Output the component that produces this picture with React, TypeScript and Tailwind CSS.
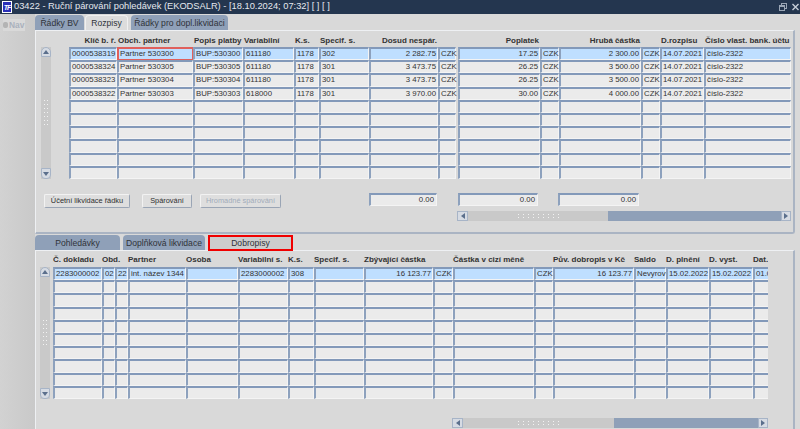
const topCols = [
  { t: "Klíč b. ř.", w: 48, h: "right" },
  { t: "Obch. partner", w: 76 },
  { t: "Popis platby", w: 50 },
  { t: "Variabilní", w: 51 },
  { t: "K.s.", w: 25 },
  { t: "Specif. s.", w: 50 },
  { t: "Dosud nespár.", w: 69, h: "right" },
  { t: "", w: 18 },
  { t: "", w: 2, spacer: true },
  { t: "Poplatek", w: 82, h: "right" },
  { t: "", w: 19 },
  { t: "Hrubá částka", w: 82, h: "right" },
  { t: "", w: 19 },
  { t: "D.rozpisu", w: 44 },
  { t: "Číslo vlast. bank. účtu", w: 87 },
];

const topRows = [
  ["0000538319", "Partner 530300", "BUP:530300", "611180", "1178", "302", "2 282.75", "CZK", "", "17.25", "CZK", "2 300.00", "CZK", "14.07.2021", "číslo-2322"],
  ["0000538324", "Partner 530305", "BUP:530305", "611180", "1178", "301", "3 473.75", "CZK", "", "26.25", "CZK", "3 500.00", "CZK", "14.07.2021", "číslo-2322"],
  ["0000538323", "Partner 530304", "BUP:530304", "611180", "1178", "301", "3 473.75", "CZK", "", "26.25", "CZK", "3 500.00", "CZK", "14.07.2021", "číslo-2322"],
  ["0000538322", "Partner 530303", "BUP:530303", "618000", "1178", "301", "3 970.00", "CZK", "", "30.00", "CZK", "4 000.00", "CZK", "14.07.2021", "číslo-2322"],
];

const topRight = [0, 6, 9, 11];

const lowCols = [
  { t: "Č. dokladu", w: 49 },
  { t: "Obd.", w: 13 },
  { t: "", w: 13 },
  { t: "Partner", w: 58 },
  { t: "Osoba", w: 52 },
  { t: "Variabilní s.", w: 50 },
  { t: "K.s.", w: 26 },
  { t: "Specif. s.", w: 50 },
  { t: "Zbývající částka", w: 69 },
  { t: "", w: 20 },
  { t: "Částka v cizí měně", w: 81 },
  { t: "", w: 19 },
  { t: "Pův. dobropis v Kč", w: 81 },
  { t: "Saldo", w: 32 },
  { t: "D. plnění", w: 43 },
  { t: "D. vyst.", w: 44 },
  { t: "Dat.", w: 44 },
];

const lowRow = ["2283000002", "02", "22", "int. název 1344", "", "2283000002", "308", "", "16 123.77", "CZK", "", "CZK", "16 123.77", "Nevyrov", "15.02.2022", "15.02.2022", "01.03.2022"];
const lowRight = [8, 12];

function Cell({ text, sel, right, red }: { text?: string; sel?: boolean; right?: boolean; red?: boolean }) {
  return (
    <div
      className={
        "h-[13.2px] whitespace-nowrap border-t-2 border-l-2 border-r border-b px-px text-[7.8px] leading-[9.5px] text-[#333] " +
        (red
          ? "border-[#e0605c] border-t-[#e0605c] border-l-[#e0605c] "
          : "border-t-[#8399b9] border-l-[#8da1bd] border-r-[#f4f4f4] border-b-[#f4f4f4] ") +
        (sel ? "bg-[#bfdfff] " : "bg-[#ebebeb] ") +
        (right ? "text-right" : "text-left")
      }
    >
      {text}
    </div>
  );
}

function Dots({ vertical }: { vertical?: boolean }) {
  const dots = Array.from({ length: vertical ? 14 : 18 });
  return (
    <div className={vertical ? "grid grid-cols-2 gap-x-[2px] gap-y-[3px]" : "grid grid-flow-col grid-rows-2 gap-x-[4px] gap-y-[2px]"}>
      {dots.map((_, i) => (
        <span key={i} className="block h-px w-px bg-[#f2f2f2]" />
      ))}
    </div>
  );
}

function Arrow({ dir }: { dir: "up" | "down" | "left" | "right" }) {
  const pts = { up: "1,6 4,2 7,6", down: "1,2 4,6 7,2", left: "6,1 2,4 6,7", right: "2,1 6,4 2,7" }[dir];
  return (
    <svg width="8" height="8" viewBox="0 0 8 8" className="block">
      <polygon points={pts} fill="#5b6f8c" />
    </svg>
  );
}

function VScroll({ className }: { className: string }) {
  return (
    <div className={"flex w-[10px] flex-col items-center justify-between bg-[#c9c9c9] " + className}>
      <div className="flex h-[10px] w-[10px] items-center justify-center rounded-t-full border border-[#a7b4c7] bg-[#d6dbe3]">
        <Arrow dir="up" />
      </div>
      <Dots vertical />
      <div className="flex h-[11px] w-[10px] items-center justify-center rounded-b-[4px] border border-[#a7b4c7] bg-[#d6dbe3]">
        <Arrow dir="down" />
      </div>
    </div>
  );
}

function HScroll({ className, thumb }: { className: string; thumb: string }) {
  return (
    <div className={"flex h-[10px] items-stretch bg-[#8fa0b8] " + className}>
      <div className="flex w-[11px] items-center justify-center border border-[#a7b4c7] bg-[#d6dbe3]">
        <Arrow dir="left" />
      </div>
      <div className={"flex items-center justify-center bg-[#c9c9c9] " + thumb}>
        <Dots />
      </div>
      <div className="ml-auto flex w-[10px] items-center justify-center border border-[#a7b4c7] bg-[#d6dbe3]">
        <Arrow dir="right" />
      </div>
    </div>
  );
}

function Btn({ children, className, disabled }: { children: string; className: string; disabled?: boolean }) {
  return (
    <div
      className={
        "mt-px flex h-[14px] items-center justify-center rounded-[2px] border border-[#f2f2f2] border-r-[#9aa5b5] border-b-[#9aa5b5] bg-[#dedede] text-[7.4px] " +
        (disabled ? "text-[#a2acba] " : "text-[#2e2e2e] ") +
        className
      }
    >
      {children}
    </div>
  );
}

function Tab({ children, className }: { children: string; className: string }) {
  return <div className={"flex items-center justify-center pt-px text-[8.6px] text-[#2f3338] " + className}>{children}</div>;
}

function Sum({ className }: { className: string }) {
  return (
    <div className={"h-[13px] border-t-2 border-l-2 border-r border-b border-t-[#8399b9] border-l-[#8da1bd] border-r-[#f4f4f4] border-b-[#f4f4f4] bg-[#ebebeb] px-[2px] text-right text-[7.8px] leading-[9.5px] text-[#333] " + className}>
      0.00
    </div>
  );
}

export default function App() {
  return (
    <div className="flex h-[429px] w-[800px] flex-col overflow-hidden bg-[#d9d9d9] font-['Liberation_Sans',Arial,sans-serif]">
      {/* title bar */}
      <div className="flex h-[14px] shrink-0 items-center bg-[#24364f] text-[9.3px] text-[#e4e8ee]">
        <div className="ml-[2px] mr-[2px] flex h-[12px] w-[10px] shrink-0 items-center justify-center overflow-hidden border border-white bg-[#2a2fb8] text-[7px] font-bold italic leading-none tracking-[-1px] text-white">
          TF
        </div>
        <span className="whitespace-nowrap">03422 - Ruční párování pohledávek (EKODSALR) - [18.10.2024; 07:32] [ ] [ ]</span>
        <div className="ml-auto flex items-center gap-[5px] pr-px">
          <svg width="8" height="8" viewBox="0 0 8 8">
            <rect x="2.5" y="0.5" width="5" height="5" fill="none" stroke="#9aa6b6" />
            <rect x="0.5" y="2.5" width="5" height="5" fill="#24364f" stroke="#9aa6b6" />
            <rect x="0.5" y="2.5" width="5" height="1.5" fill="#9aa6b6" />
          </svg>
          <svg width="7" height="8" viewBox="0 0 7 8">
            <path d="M0.5 1 L6.5 7 M6.5 1 L0.5 7" stroke="#c6ced8" strokeWidth="1.4" />
          </svg>
        </div>
      </div>

      <div className="flex min-h-0 flex-1">
        {/* nav rail */}
        <div className="w-[35px] shrink-0 bg-gradient-to-r from-[#d2d2d2] to-[#c9c9c9] pl-[3px] pt-[5px]">
          <div className="flex h-[12px] w-[22px] items-center gap-[1px] bg-[#d9d9d9] text-[8.4px] font-bold text-[#a9b1bd]">
            <span className="block h-[6px] w-[5px] rounded-[2px] bg-[#b4b4b4]" />
            Nav
          </div>
        </div>

        {/* main */}
        <div className="flex w-[760px] shrink-0 flex-col">
          {/* upper tabs */}
          <div className="flex h-[16px] shrink-0 items-stretch pt-px">
            <Tab className="w-[49px] rounded-t-[4px] bg-[#8fa0b8]">Řádky BV</Tab>
            <Tab className="ml-px w-[43px] rounded-t-[4px] border-x border-t border-[#f0f0f0] bg-[#dcdcdc]">Rozpisy</Tab>
            <Tab className="ml-[3px] w-[97px] rounded-t-[4px] bg-[#8fa0b8]">Řádky pro dopl.likvidaci</Tab>
          </div>

          {/* upper panel */}
          <div className="h-[204px] shrink-0 rounded-br-[3px] border-t border-l border-[#eef0f3] border-b-2 border-r-2 border-b-[#aab4c3] border-r-[#aab4c3] bg-[#d9d9d9] pl-[5px] pt-[3px]">
            <div className="flex">
              <VScroll className="mt-[13px] h-[132px]" />
              <div className="ml-[18px]">
                <div className="grid grid-cols-[48px_76px_50px_51px_25px_50px_69px_18px_2px_82px_19px_82px_19px_44px_87px] text-[8px] font-bold text-[#333]">
                  {topCols.map((c, i) => (
                    <div key={i} className={"h-[13px] whitespace-nowrap px-px pt-[2px] leading-[9px] " + (c.h === "right" ? "flex justify-end" : "")}>
                      {c.t}
                    </div>
                  ))}
                </div>
                <div className="grid grid-cols-[48px_76px_50px_51px_25px_50px_69px_18px_2px_82px_19px_82px_19px_44px_87px]">
                  {Array.from({ length: 10 }).flatMap((_, r) =>
                    topCols.map((c, i) =>
                      c.spacer ? (
                        <div key={r + "-" + i} />
                      ) : (
                        <Cell
                          key={r + "-" + i}
                          text={topRows[r]?.[i]}
                          sel={r === 0}
                          red={r === 0 && i === 1}
                          right={topRight.includes(i)}
                        />
                      )
                    )
                  )}
                </div>
              </div>
            </div>

            {/* buttons and totals */}
            <div className="mt-[14px] flex items-start">
              <Btn className="ml-[3px] w-[86px]">Účetní likvidace řádku</Btn>
              <Btn className="ml-[12px] w-[50px]">Spárování</Btn>
              <Btn className="ml-[8px] w-[81px]" disabled>Hromadné spárování</Btn>
              <Sum className="ml-[88px] w-[68px]" />
              <Sum className="ml-[21px] w-[80px]" />
              <Sum className="ml-[20px] w-[81px]" />
            </div>
            <HScroll className="ml-[416px] mt-[3px] w-[334px]" thumb="w-[140px]" />
          </div>

          {/* lower tabs */}
          <div className="flex h-[16px] shrink-0 items-stretch pt-px">
            <Tab className="w-[85px] rounded-t-[4px] bg-[#8fa0b8]">Pohledávky</Tab>
            <Tab className="ml-[3px] w-[82px] rounded-t-[4px] bg-[#8fa0b8]">Doplňková likvidace</Tab>
            <Tab className="relative z-10 -mb-px ml-[3px] w-[85px] border-2 border-[#f00000] bg-[#cdcdcd]">Dobropisy</Tab>
          </div>

          {/* lower panel */}
          <div className="min-h-0 flex-1 border-t border-l border-r-2 border-[#eef0f3] border-r-[#aab4c3] pl-[4px] pt-[2px]">
            <div className="flex">
              <VScroll className="mt-[14px] h-[132px]" />
              <div className="ml-[3px] w-[715px] overflow-hidden">
                <div className="grid w-[775px] grid-cols-[49px_13px_13px_58px_52px_50px_26px_50px_69px_20px_81px_19px_81px_32px_43px_44px_44px] text-[8px] font-bold text-[#333]">
                  {lowCols.map((c, i) => (
                    <div key={i} className="h-[14px] whitespace-nowrap pt-[2px] leading-[9px]">
                      {c.t}
                    </div>
                  ))}
                </div>
                <div className="grid w-[775px] grid-cols-[49px_13px_13px_58px_52px_50px_26px_50px_69px_20px_81px_19px_81px_32px_43px_44px_44px]">
                  {Array.from({ length: 10 }).flatMap((_, r) =>
                    lowCols.map((c, i) => (
                      <Cell key={r + "-" + i} text={r === 0 ? lowRow[i] : ""} sel={r === 0} right={lowRight.includes(i)} />
                    ))
                  )}
                </div>
              </div>
            </div>
            <HScroll className="ml-[412px] mt-[19px] w-[316px]" thumb="w-[151px]" />
          </div>
        </div>
      </div>
    </div>
  );
}
